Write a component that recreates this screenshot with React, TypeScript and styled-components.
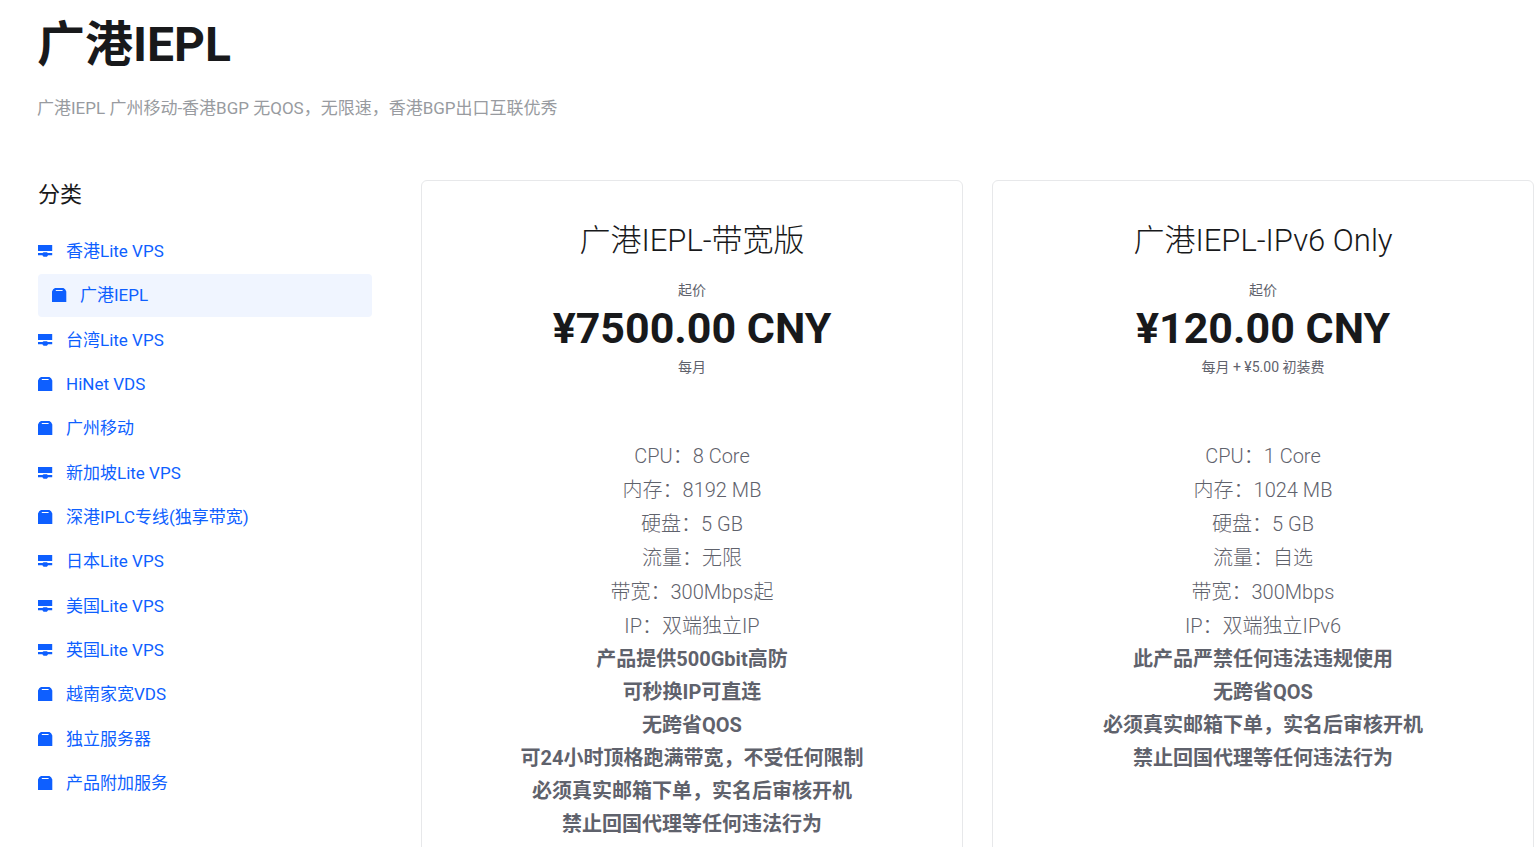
import React from 'react';
import styled, { createGlobalStyle } from 'styled-components';

const GlobalStyle = createGlobalStyle`
  *, *::before, *::after { box-sizing: border-box; }
  body {
    margin: 0;
    background: #fff;
    color: #18191b;
    font-family: Roboto, "Noto Sans CJK SC", sans-serif;
  }
  h1, h2, h3, p, ul { margin: 0; padding: 0; }
  ul { list-style: none; }
`;

const Page = styled.div`
  height: 100vh;
  overflow: hidden;
  padding: 9px 6px 0 37px;
`;

const Header = styled.header`
  margin-bottom: 60px;
`;

const Title = styled.h1`
  font-size: 48px;
  line-height: 72px;
  font-weight: 700;
`;

const Subtitle = styled.p`
  margin-top: 15px;
  font-size: 17px;
  line-height: 24px;
  color: #989ba0;
`;

const Columns = styled.div`
  display: grid;
  grid-template-columns: 335px 1fr;
  column-gap: 49px;
`;

const Sidebar = styled.aside`
  display: flex;
  flex-direction: column;
  padding-left: 1px;
`;

const SideTitle = styled.h2`
  font-size: 22px;
  line-height: 30px;
  font-weight: 400;
`;

const NavList = styled.ul`
  display: flex;
  flex-direction: column;
  justify-content: space-between;
  min-height: 575px;
  margin: 20px 0 40px;
`;

const NavLink = styled.a<{ $active?: boolean }>`
  display: flex;
  align-items: center;
  gap: 12px;
  height: 43px;
  padding: 0 ${({ $active }) => ($active ? 14 : 0)}px 1px;
  border-radius: 4px;
  background: ${({ $active }) => ($active ? '#f0f5ff' : 'transparent')};
  color: #0e5fff;
  font-size: 17px;
  line-height: 24px;
  text-decoration: none;

  svg { flex: none; }
`;

const Cards = styled.main`
  display: grid;
  grid-template-columns: 1fr 1fr;
  column-gap: 29px;
  min-height: 760px;
`;

const Card = styled.article`
  padding: 40px 30px;
  border: 1px solid #e7e8ea;
  border-radius: 6px;
  text-align: center;
`;

const CardTitle = styled.h3`
  font-size: 31px;
  line-height: 40px;
  font-weight: 300;
`;

const PriceNote = styled.p`
  font-size: 14px;
  line-height: 24px;
  color: #5f626c;
`;

const PriceBlock = styled.div`
  margin: 17px 0 60px;
`;

const Price = styled.p`
  font-size: 43px;
  line-height: 53px;
  font-weight: 700;
`;

const Specs = styled.ul`
  font-size: 20px;
  line-height: 34px;
  font-weight: 300;
  color: #5f626c;
`;

const Notes = styled.ul`
  font-size: 20px;
  line-height: 33px;
  font-weight: 700;
  color: #5f626c;
`;

const ServerIcon = () => (
  <svg width="16" height="16" viewBox="0 0 16 16" fill="currentColor" aria-hidden="true">
    <path d="M0 2h14.2v6H0zM0 10h4.6l.9-.8h3.4l.9.8h4.4v2.3h-4.4v.4l-1 1H5.6l-1-1v-.4H0z" />
  </svg>
);

const BoxIcon = () => (
  <svg width="16" height="16" viewBox="0 0 16 16" fill="currentColor" aria-hidden="true">
    <path
      fillRule="evenodd"
      d="M3 1h8.4l1.7 1.2 1.2 2.2V15H0V4.4l1.2-2.2zM3.8 3v1h6.8V3z"
    />
  </svg>
);

type Category = { name: string; icon: 'server' | 'box'; active?: boolean };

const categories: Category[] = [
  { name: '香港Lite VPS', icon: 'server' },
  { name: '广港IEPL', icon: 'box', active: true },
  { name: '台湾Lite VPS', icon: 'server' },
  { name: 'HiNet VDS', icon: 'box' },
  { name: '广州移动', icon: 'box' },
  { name: '新加坡Lite VPS', icon: 'server' },
  { name: '深港IPLC专线(独享带宽)', icon: 'box' },
  { name: '日本Lite VPS', icon: 'server' },
  { name: '美国Lite VPS', icon: 'server' },
  { name: '英国Lite VPS', icon: 'server' },
  { name: '越南家宽VDS', icon: 'box' },
  { name: '独立服务器', icon: 'box' },
  { name: '产品附加服务', icon: 'box' },
];

const products = [
  {
    name: '广港IEPL-带宽版',
    price: '¥7500.00 CNY',
    cycle: '每月',
    specs: ['CPU：8 Core', '内存：8192 MB', '硬盘：5 GB', '流量：无限', '带宽：300Mbps起', 'IP：双端独立IP'],
    notes: [
      '产品提供500Gbit高防',
      '可秒换IP可直连',
      '无跨省QOS',
      '可24小时顶格跑满带宽，不受任何限制',
      '必须真实邮箱下单，实名后审核开机',
      '禁止回国代理等任何违法行为',
    ],
  },
  {
    name: '广港IEPL-IPv6 Only',
    price: '¥120.00 CNY',
    cycle: '每月 + ¥5.00 初装费',
    specs: ['CPU：1 Core', '内存：1024 MB', '硬盘：5 GB', '流量：自选', '带宽：300Mbps', 'IP：双端独立IPv6'],
    notes: [
      '此产品严禁任何违法违规使用',
      '无跨省QOS',
      '必须真实邮箱下单，实名后审核开机',
      '禁止回国代理等任何违法行为',
    ],
  },
];

export default function App() {
  return (
    <Page lang="zh-CN">
      <GlobalStyle />
      <Header>
        <Title>广港IEPL</Title>
        <Subtitle>广港IEPL 广州移动-香港BGP 无QOS，无限速，香港BGP出口互联优秀</Subtitle>
      </Header>
      <Columns>
        <Sidebar>
          <SideTitle>分类</SideTitle>
          <nav>
            <NavList>
              {categories.map(({ name, icon, active }) => (
                <li key={name}>
                  <NavLink href="#" $active={active} aria-current={active ? 'page' : undefined}>
                    {icon === 'server' ? <ServerIcon /> : <BoxIcon />}
                    {name}
                  </NavLink>
                </li>
              ))}
            </NavList>
          </nav>
        </Sidebar>
        <Cards>
          {products.map((product) => (
            <Card key={product.name}>
              <CardTitle>{product.name}</CardTitle>
              <PriceBlock>
                <PriceNote>起价</PriceNote>
                <Price>{product.price}</Price>
                <PriceNote>{product.cycle}</PriceNote>
              </PriceBlock>
              <Specs>
                {product.specs.map((line) => (
                  <li key={line}>{line}</li>
                ))}
              </Specs>
              <Notes>
                {product.notes.map((line) => (
                  <li key={line}>{line}</li>
                ))}
              </Notes>
            </Card>
          ))}
        </Cards>
      </Columns>
    </Page>
  );
}
